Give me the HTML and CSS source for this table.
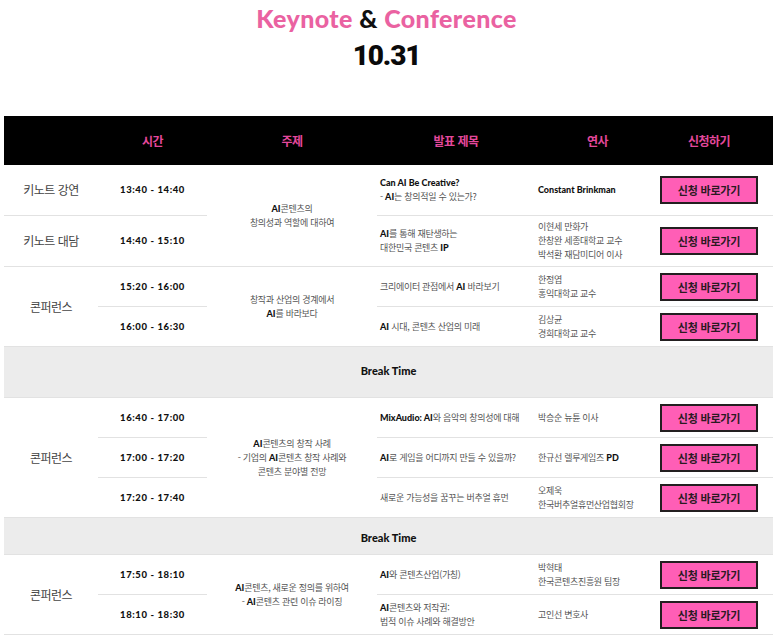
FILE: index.html
```html
<!DOCTYPE html>
<html lang="ko">
<head>
<meta charset="utf-8">
<link rel="stylesheet" href="styles.css">
</head>
<body>
<header class="hero">
  <h1 class="hero-title"><span class="pink">Keynote</span> &amp; <span class="pink">Conference</span></h1>
  <div class="hero-date">10.31</div>
</header>
<table class="sched">
  <colgroup>
    <col class="c1"><col class="c2"><col class="c3"><col class="c4"><col class="c5"><col class="c6">
  </colgroup>
  <thead>
    <tr><th></th><th>시간</th><th>주제</th><th>발표 제목</th><th>연사</th><th>신청하기</th></tr>
  </thead>
  <tbody>
    <tr class="tall">
      <td class="cat">키노트 강연</td>
      <td class="time">13:40 - 14:40</td>
      <td class="topic" rowspan="2"><b>AI</b>콘텐츠의<br>창의성과 역할에 대하여</td>
      <td class="title"><b>Can AI Be Creative?</b><br>- <b>AI</b>는 창의적일 수 있는가?</td>
      <td class="spk"><b>Constant Brinkman</b></td>
      <td class="act"><a class="btn">신청 바로가기</a></td>
    </tr>
    <tr class="tall">
      <td class="cat">키노트 대담</td>
      <td class="time">14:40 - 15:10</td>
      <td class="title"><b>AI</b>를 통해 재탄생하는<br>대한민국 콘텐츠 <b>IP</b></td>
      <td class="spk">이현세 만화가<br>한창완 세종대학교 교수<br>박석환 재담미디어 이사</td>
      <td class="act"><a class="btn">신청 바로가기</a></td>
    </tr>
    <tr>
      <td class="cat" rowspan="2">콘퍼런스</td>
      <td class="time">15:20 - 16:00</td>
      <td class="topic" rowspan="2">창작과 산업의 경계에서<br><b>AI</b>를 바라보다</td>
      <td class="title">크리에이터 관점에서 <b>AI</b> 바라보기</td>
      <td class="spk">한정엽<br>홍익대학교 교수</td>
      <td class="act"><a class="btn">신청 바로가기</a></td>
    </tr>
    <tr>
      <td class="time">16:00 - 16:30</td>
      <td class="title"><b>AI</b> 시대, 콘텐츠 산업의 미래</td>
      <td class="spk">김상균<br>경희대학교 교수</td>
      <td class="act"><a class="btn">신청 바로가기</a></td>
    </tr>
    <tr class="brk"><td colspan="6">Break Time</td></tr>
    <tr>
      <td class="cat" rowspan="3">콘퍼런스</td>
      <td class="time">16:40 - 17:00</td>
      <td class="topic" rowspan="3"><b>AI</b>콘텐츠의 창작 사례<br>- 기업의 <b>AI</b>콘텐츠 창작 사례와<br>콘텐츠 분야별 전망</td>
      <td class="title"><b>MixAudio: AI</b>와 음악의 창의성에 대해</td>
      <td class="spk">박승순 뉴튠 이사</td>
      <td class="act"><a class="btn">신청 바로가기</a></td>
    </tr>
    <tr>
      <td class="time">17:00 - 17:20</td>
      <td class="title"><b>AI</b>로 게임을 어디까지 만들 수 있을까?</td>
      <td class="spk">한규선 렐루게임즈 <b>PD</b></td>
      <td class="act"><a class="btn">신청 바로가기</a></td>
    </tr>
    <tr>
      <td class="time">17:20 - 17:40</td>
      <td class="title">새로운 가능성을 꿈꾸는 버추얼 휴먼</td>
      <td class="spk">오제욱<br>한국버추얼휴먼산업협회장</td>
      <td class="act"><a class="btn">신청 바로가기</a></td>
    </tr>
    <tr class="brk brk2"><td colspan="6">Break Time</td></tr>
    <tr>
      <td class="cat" rowspan="2">콘퍼런스</td>
      <td class="time">17:50 - 18:10</td>
      <td class="topic" rowspan="2"><b>AI</b>콘텐츠, 새로운 정의를 위하여<br>- <b>AI</b>콘텐츠 관련 이슈 라이징</td>
      <td class="title"><b>AI</b>와 콘텐츠산업(가칭)</td>
      <td class="spk">박혁태<br>한국콘텐츠진흥원 팀장</td>
      <td class="act"><a class="btn">신청 바로가기</a></td>
    </tr>
    <tr>
      <td class="time">18:10 - 18:30</td>
      <td class="title"><b>AI</b>콘텐츠와 저작권:<br>법적 이슈 사례와 해결방안</td>
      <td class="spk">고인선 변호사</td>
      <td class="act"><a class="btn">신청 바로가기</a></td>
    </tr>
  </tbody>
</table>
</body>
</html>
```
FILE: styles.css
```css
html, body {
  margin: 0;
  padding: 0;
  background: #fff;
}
body {
  font-family: "Lato", "Noto Sans CJK KR", sans-serif;
  color: #222;
}
.hero {
  text-align: center;
  padding-top: 4px;
}
.hero-title {
  margin: 0;
  font-family: "Lato", sans-serif;
  font-weight: 900;
  font-size: 25px;
  line-height: 28px;
  color: #111;
  letter-spacing: 0.4px;
}
.pink {
  color: #ea62a1;
}
.hero-date {
  margin-top: 8px;
  font-family: "Roboto", sans-serif;
  font-weight: 900;
  font-size: 28px;
  line-height: 32px;
  letter-spacing: -1.2px;
  color: #0a0a0a;
}
.sched {
  margin: 44px 0 0 4px;
  width: 769px;
  border-collapse: collapse;
  table-layout: fixed;
}
.c1 { width: 94px; }
.c2 { width: 109px; }
.c3 { width: 170px; }
.c4 { width: 158px; }
.c5 { width: 125px; }
.c6 { width: 113px; }
.sched th {
  background: #000;
  height: 49px;
  padding: 0;
  font-family: "Noto Sans CJK KR", sans-serif;
  font-weight: 700;
  font-size: 12px;
  letter-spacing: -0.5px;
  color: #e4489c;
  text-align: center;
}
.sched th:last-child {
  padding-right: 15px;
}
.sched td {
  border-bottom: 1px solid #e2e2e2;
  padding: 0;
  height: 39px;
  vertical-align: middle;
  font-family: "Noto Sans CJK KR", sans-serif;
  font-size: 9px;
  line-height: 14px;
  letter-spacing: -0.3px;
  color: #555;
}
.sched tr.tall td {
  height: 50px;
}
.sched td b {
  font-family: "Lato", "Noto Sans CJK KR", sans-serif;
  font-weight: 900;
  color: #111;
  letter-spacing: 0;
}
.sched td.cat {
  text-align: center;
  font-size: 12px;
  letter-spacing: -0.5px;
  color: #444;
}
.sched td.time {
  text-align: center;
  font-family: "Lato", sans-serif;
  font-weight: 900;
  font-size: 9.5px;
  letter-spacing: 0.6px;
  color: #111;
}
.sched td.topic {
  text-align: center;
}
.sched td.title,
.sched td.spk {
  padding-left: 3px;
}
.sched td.act {
  text-align: center;
  padding-right: 15px;
}
.btn {
  display: inline-block;
  box-sizing: border-box;
  width: 98px;
  height: 28px;
  border: 2px solid #231f20;
  background: #ff5eb6;
  font-family: "Noto Sans CJK KR", sans-serif;
  font-weight: 700;
  font-size: 11px;
  line-height: 24px;
  letter-spacing: -0.2px;
  color: #2a1a22;
  vertical-align: middle;
}
.sched tr.brk td {
  background: #ececec;
  height: 47px;
  padding-bottom: 3px;
  text-align: center;
  font-family: "Lato", sans-serif;
  font-weight: 900;
  font-size: 11px;
  color: #111;
  letter-spacing: 0;
}
.sched tr.brk2 td {
  height: 32px;
  padding-top: 4px;
  padding-bottom: 0;
}
```
